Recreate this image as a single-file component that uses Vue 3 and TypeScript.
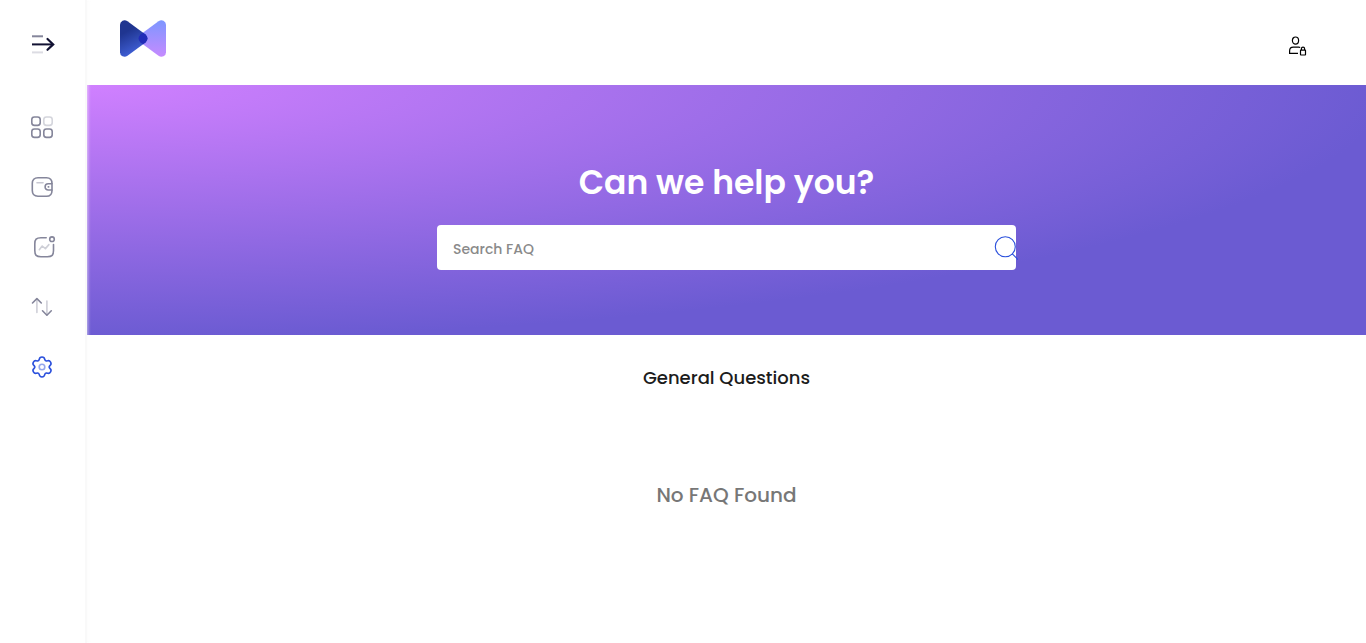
<script setup lang="ts">
import { ref } from 'vue'

interface NavItem {
  id: string
  label: string
}

const items: NavItem[] = [
  { id: 'dashboard', label: 'Dashboard' },
  { id: 'wallet', label: 'Wallet' },
  { id: 'activity', label: 'Activity' },
  { id: 'transfers', label: 'Transfers' },
  { id: 'settings', label: 'Settings' },
]

const active = ref('settings')
const query = ref('')
</script>

<template>
  <div class="layout">
    <aside class="sidebar">
      <button class="toggle" type="button" aria-label="Expand menu">
        <svg width="26" height="24" viewBox="0 0 26 24" fill="none">
          <path d="M1 4.3h11" stroke="#85869b" stroke-width="2" />
          <path d="M1 12.4h21" stroke="#111132" stroke-width="2" />
          <path d="M16.500 7l5.700 5.400-5.700 5.400" stroke="#111132" stroke-width="2.200" stroke-linecap="round" />
          <path d="M1 20.400h11" stroke="#dcdce3" stroke-width="2" />
        </svg>
      </button>
      <nav class="nav" aria-label="Main">
        <a
          v-for="item in items"
          :key="item.id"
          href="#"
          class="nav-link"
          :class="{ active: item.id === active }"
          :aria-label="item.label"
          @click.prevent="active = item.id"
        >
          <svg width="28" height="28" viewBox="0 0 28 28" fill="none" stroke="currentColor" stroke-width="1.6" stroke-linecap="round" stroke-linejoin="round">
            <g v-if="item.id === 'dashboard'">
              <rect x="3.8" y="4" width="8.400" height="8.400" rx="2.600" />
              <rect x="15.800" y="4" width="8.400" height="8.400" rx="2.600" opacity=".35" />
              <rect x="3.800" y="16" width="8.400" height="8.400" rx="2.600" />
              <rect x="15.800" y="16" width="8.400" height="8.400" rx="2.600" />
            </g>
            <g v-else-if="item.id === 'wallet'">
              <path d="M24 10.500c0-4-2-5.800-5.500-5.800H10C6.200 4.700 4.300 6.800 4.300 10.300v7.200c0 3.500 2 5.700 5.700 5.700h8.500c3.500 0 5.500-1.900 5.500-5.800" />
              <path d="M24 10.800h-3.800a3.100 3.100 0 0 0 0 6.200H24zM20.300 13.900h.4" />
              <path d="M9 9.700h6" opacity=".45" />
            </g>
            <g v-else-if="item.id === 'activity'">
              <path d="M18.200 4.800H13c-4.800 0-6.200 1.500-6.200 6.200v6.500c0 4.700 1.400 6.200 6.200 6.200h6.300c4.800 0 6.200-1.500 6.200-6.200v-6" />
              <circle cx="24" cy="6.200" r="2.300" />
              <path d="M11.300 16.700l2.900-3.700 3.200 2.600 3.500-4" opacity=".4" />
            </g>
            <g v-else-if="item.id === 'transfers'">
              <path d="M4.500 10l4.400-4.400 4.400 4.400M14.500 17.800l4.400 4.400 4.400-4.400" />
              <path d="M8.900 6v13.500M18.900 8v14" opacity=".4" />
            </g>
            <g v-else>
              <path d="M11.260 6.480A2.760 2.760 0 0 1 16.740 6.480A2 2 0 0 0 19.140 7.870A2.760 2.760 0 0 1 21.880 12.610A2 2 0 0 0 21.880 15.390A2.760 2.760 0 0 1 19.140 20.130A2 2 0 0 0 16.740 21.520A2.760 2.760 0 0 1 11.260 21.520A2 2 0 0 0 8.860 20.130A2.760 2.760 0 0 1 6.120 15.390A2 2 0 0 0 6.120 12.610A2.760 2.760 0 0 1 8.860 7.870A2 2 0 0 0 11.260 6.480Z" />
              <circle cx="14" cy="14" r="2.800" opacity=".5" />
            </g>
          </svg>
        </a>
      </nav>
    </aside>

    <div class="content">
      <header class="topbar">
        <a class="logo" href="#" aria-label="Home">
          <svg width="46" height="37" viewBox="0 0 46 38" preserveAspectRatio="none">
            <defs>
              <linearGradient id="wing-left" x1="0" y1="0" x2=".4" y2="1">
                <stop offset=".35" stop-color="#1f3590" />
                <stop offset="1" stop-color="#4262da" />
              </linearGradient>
              <linearGradient id="wing-right" x1="0" y1="0" x2="0" y2="1">
                <stop offset="0" stop-color="#7d96ff" />
                <stop offset="1" stop-color="#c68bff" />
              </linearGradient>
            </defs>
            <path d="M38.500 1.200L20.500 15Q16.500 19 20.500 23L38.500 36.800Q41 38.500 43.500 37.300Q46 36 46 33V5Q46 2 43.500 .7Q41 -.5 38.500 1.200Z" fill="url(#wing-right)" />
            <path d="M7.500 1.200L25.500 15Q29.500 19 25.500 23L7.500 36.800Q5 38.500 2.500 37.300Q0 36 0 33V5Q0 2 2.500 .7Q5 -.5 7.500 1.200Z" fill="url(#wing-left)" />
            <path d="M23 13.100L25.500 15Q29.500 19 25.500 23L23 24.900L20.500 23Q16.500 19 20.500 15Z" fill="#202bb8" />
          </svg>
        </a>
        <button class="account" type="button" aria-label="Account">
          <svg width="20" height="20" viewBox="0 0 20 20" fill="none" stroke="#000" stroke-width="1.200">
            <ellipse cx="7.500" cy="4.600" rx="3.100" ry="3.600" />
            <path d="M10 17.400H1.600v-2.500q0-3.700 3.700-3.700h5.400q1 0 1.500.3" />
            <rect x="12.500" y="14.200" width="5" height="4.800" rx=".4" />
            <path d="M13.400 14v-1.200a1.600 1.600 0 0 1 3.200 0V14" />
          </svg>
        </button>
      </header>

      <section class="hero">
        <h1>Can we help you?</h1>
        <form class="search" role="search" @submit.prevent>
          <input v-model="query" type="text" placeholder="Search FAQ" aria-label="Search FAQ" />
          <button class="search-button" type="submit" aria-label="Search">
            <svg width="24" height="24" viewBox="0 0 24 24" fill="none" stroke="#2b50dc" stroke-width="1.100">
              <circle cx="11.300" cy="10.800" r="10" />
              <path d="M18.300 17.800l6 6" />
            </svg>
          </button>
        </form>
      </section>

      <main class="faq">
        <h2>General Questions</h2>
        <p>No FAQ Found</p>
      </main>
    </div>
  </div>
</template>

<style>
body {
  margin: 0;
  background: #fff;
}
</style>

<style scoped>
.layout {
  display: flex;
  min-height: 100vh;
  font-family: Poppins, Inter, "Liberation Sans", sans-serif;
  color: #1c1c1c;
}

button {
  display: flex;
  padding: 0;
  border: 0;
  background: none;
  cursor: pointer;
}

.sidebar {
  position: relative;
  z-index: 1;
  box-sizing: border-box;
  width: 87px;
  flex: none;
  display: flex;
  flex-direction: column;
  padding: 32px 0 0 28px;
  border-right: 2px solid #f9f9f9;
  box-shadow: 1px 0 3px rgba(249, 249, 249, 0.6);
}

.toggle {
  align-self: flex-start;
  margin-left: 3px;
}

.nav {
  display: flex;
  flex-direction: column;
  align-items: flex-start;
  gap: 32px;
  margin-top: 57px;
}

.nav-link {
  display: flex;
  color: #85869b;
}

.nav-link.active {
  color: #2b50dc;
}

.content {
  flex: 1;
  min-width: 0;
}

.topbar {
  box-sizing: border-box;
  height: 85px;
  display: flex;
  justify-content: space-between;
  align-items: flex-start;
  padding: 20px 58px 0 33px;
}

.logo {
  display: flex;
}

.account {
  margin-top: 16px;
}

.hero {
  box-sizing: border-box;
  height: 250px;
  display: flex;
  flex-direction: column;
  align-items: center;
  gap: 16px;
  padding-top: 72px;
  background: radial-gradient(farthest-corner at 0 0, #d080ff 0%, #6b5bd2 72%);
}

h1 {
  margin: 0;
  font-size: 33px;
  line-height: 52px;
  font-weight: 600;
  color: #fff;
}

.search {
  box-sizing: border-box;
  display: flex;
  align-items: center;
  width: 579px;
  max-width: 90%;
  height: 45px;
  border-radius: 4px;
  background: #fff;
}

.search input {
  box-sizing: border-box;
  flex: 1;
  min-width: 0;
  height: 45px;
  padding: 4px 16px 0;
  border: 0;
  border-radius: 4px;
  outline: 0;
  background: transparent;
  font: 500 14px/20px Poppins, Inter, "Liberation Sans", sans-serif;
  color: #1c1c1c;
}

.search input::placeholder {
  color: #8a8a8a;
  opacity: 1;
}

.search-button {
  margin-right: -2px;
}

.faq {
  text-align: center;
}

h2 {
  margin: 0;
  padding-top: 29px;
  font-size: 18px;
  line-height: 28px;
  font-weight: 500;
}

.faq p {
  margin: 87px 0 0;
  font-size: 20px;
  line-height: 32px;
  font-weight: 500;
  color: #777;
}
</style>
